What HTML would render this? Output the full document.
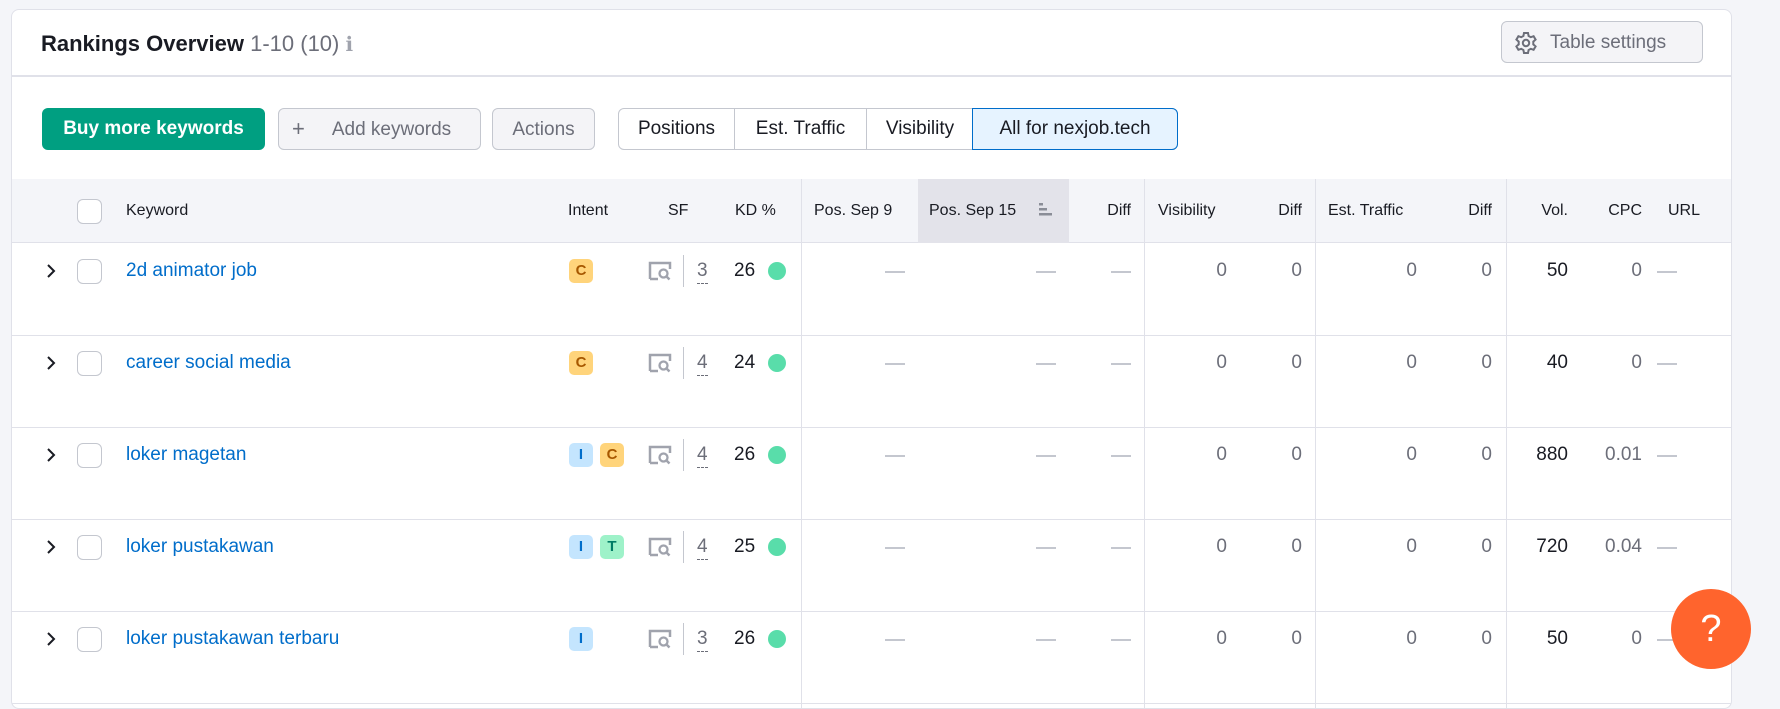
<!DOCTYPE html>
<html><head><meta charset="utf-8"><style>
*{box-sizing:border-box;margin:0;padding:0}
body{width:1780px;height:696px;background:#f4f5f9;font-family:"Liberation Sans",sans-serif;position:relative;overflow:hidden;color:#191b23}
.card{position:absolute;left:11px;top:9px;width:1721px;height:700px;background:#fff;border:1px solid #e0e1e9;border-radius:8px;overflow:hidden}
.a{position:absolute;white-space:nowrap}
.btn{position:absolute;top:98px;height:42px;border-radius:6px;font-size:19px;line-height:42px;text-align:center}
.g{background:#f4f4f7;border:1px solid #c4c7cf;color:#6c6e79}
.seg{position:absolute;top:0;height:42px;font-size:19px;line-height:40px;text-align:center;color:#191b23}
.th{position:absolute;top:0;font-size:16px;line-height:64px;color:#191b23}
.vl{position:absolute;width:1px;background:#e0e1e9}
.cb{position:absolute;width:25px;height:25px;border:1px solid #c4c7cf;border-radius:6px;background:#fff}
.kw{font-size:19px;color:#006dca}
.num{font-size:19px;color:#6c6e79}
.dash{position:absolute;width:20px;height:2px;background:#c4c7cf}
.bd{position:absolute;width:24px;height:24px;border-radius:5px;font-size:15px;font-weight:bold;text-align:center;line-height:24px}
</style></head><body>
<div class="card">
 <div class="a" style="left:29px;top:18px;font-size:22px;font-weight:bold;line-height:32px">Rankings Overview <span style="font-weight:normal;color:#6c6e79">1-10 (10)</span> <span style="color:#a0a3ad;font-weight:normal;font-size:20px">ℹ</span></div>
 <div class="a" style="left:1489px;top:11px;width:202px;height:42px;border:1px solid #c4c7cf;border-radius:6px;background:#f4f4f7;color:#6c6e79;font-size:19px;line-height:42px;padding-left:48px">Table settings</div>
 <svg class="a" style="left:1502px;top:21px" width="24" height="24" viewBox="0 0 24 24" fill="none" stroke="#6c6e79" stroke-width="2"><circle cx="12" cy="12" r="3.2"/><path d="M10 2h4l.6 3 2.2 1.2 2.8-1 2 3.4-2.3 2v2.8l2.3 2-2 3.4-2.8-1-2.2 1.2-.6 3h-4l-.6-3-2.2-1.2-2.8 1-2-3.4 2.3-2v-2.8l-2.3-2 2-3.4 2.8 1 2.2-1.2z"/></svg>
 <div class="a" style="left:0;top:65px;width:1721px;height:2px;background:#e0e1e9"></div>
 <div class="btn" style="left:30px;width:223px;background:#009f81;color:#fff;font-weight:bold">Buy more keywords</div>
 <div class="btn g" style="left:266px;width:203px;padding-left:24px"><span style="position:absolute;left:13px;font-size:22px;top:-1px">+</span>Add keywords</div>
 <div class="btn g" style="left:480px;width:103px">Actions</div>
 <div class="a" style="left:606px;top:98px;width:560px;height:42px;border:1px solid #c4c7cf;border-radius:6px;background:#fff;overflow:hidden">
  <div class="seg" style="left:0;width:116px;border-right:1px solid #c4c7cf">Positions</div>
  <div class="seg" style="left:116px;width:132px;border-right:1px solid #c4c7cf">Est. Traffic</div>
  <div class="seg" style="left:248px;width:106px">Visibility</div>
 </div>
 <div class="a" style="left:960px;top:98px;width:206px;height:42px;border:1px solid #006dca;background:#e6f3ff;border-radius:0 6px 6px 0;font-size:19px;line-height:40px;text-align:center">All for nexjob.tech</div>
 <div class="a" style="left:0;top:169px;width:1721px;height:530px">
  <div class="a" style="left:0;top:0;width:1721px;height:64px;background:#f4f5f9;border-bottom:1px solid #e0e1e9"></div>
  <div class="a" style="left:906px;top:0;width:151px;height:64px;background:#e3e3ea"></div>
  <div class="cb" style="left:65px;top:20px"></div>
  <div class="th" style="left:114px">Keyword</div>
  <div class="th" style="left:556px">Intent</div>
  <div class="th" style="left:656px">SF</div>
  <div class="th" style="left:723px">KD %</div>
  <div class="th" style="left:802px">Pos. Sep 9</div>
  <div class="th" style="left:917px">Pos. Sep 15</div>
  <svg class="a" style="left:1025px;top:22px" width="16" height="16"><rect x="2" y="2" width="4" height="2.5" fill="#8a8d97"/><rect x="2" y="7" width="8" height="2.5" fill="#8a8d97"/><rect x="2" y="12" width="13" height="2.5" fill="#8a8d97"/></svg>
  <div class="th" style="left:1089px;width:30px;text-align:right">Diff</div>
  <div class="th" style="left:1146px">Visibility</div>
  <div class="th" style="left:1260px;width:30px;text-align:right">Diff</div>
  <div class="th" style="left:1316px">Est. Traffic</div>
  <div class="th" style="left:1450px;width:30px;text-align:right">Diff</div>
  <div class="th" style="left:1516px;width:40px;text-align:right">Vol.</div>
  <div class="th" style="left:1590px;width:40px;text-align:right">CPC</div>
  <div class="th" style="left:1656px">URL</div>
  <div class="vl" style="left:789px;top:0;height:530px"></div>
  <div class="vl" style="left:1132px;top:0;height:530px"></div>
  <div class="vl" style="left:1303px;top:0;height:530px"></div>
  <div class="vl" style="left:1494px;top:0;height:530px"></div>
  <div id="rows"></div>
 </div>
</div>
<div class="a" style="left:1671px;top:589px;width:80px;height:80px;border-radius:50%;background:#ff642d;color:#fff;font-size:38px;text-align:center;line-height:80px">?</div>
<script>
var R=[["2d animator job",["C"],"3","26","50","0"],["career social media",["C"],"4","24","40","0"],["loker magetan",["I","C"],"4","26","880","0.01"],["loker pustakawan",["I","T"],"4","25","720","0.04"],["loker pustakawan terbaru",["I"],"3","26","50","0"]];
var col={C:["#ffd47b","#a75800"],I:["#c4e5fe","#006dca"],T:["#9ef2c9","#007c65"]};
var h="";
R.forEach(function(r,i){var t=64+i*92,c=t+28;
h+='<div class="a" style="left:0;top:'+(t+92)+'px;width:1721px;height:1px;background:#e0e1e9"></div>';
h+='<svg class="a" style="left:34px;top:'+(c-7)+'px" width="10" height="14"><path d="M2 1l6 6-6 6" stroke="#191b23" stroke-width="2" fill="none"/></svg>';
h+='<div class="cb" style="left:65px;top:'+(c-12)+'px"></div>';
h+='<div class="a kw" style="left:114px;top:'+(c-12)+'px;line-height:24px">'+r[0]+'</div>';
r[1].forEach(function(b,j){h+='<div class="bd" style="left:'+(557+j*31)+'px;top:'+(c-12)+'px;background:'+col[b][0]+';color:'+col[b][1]+'">'+b+'</div>'});
h+='<svg class="a" style="left:636px;top:'+(c-10)+'px" width="24" height="20"><path d="M2 18V2h20v6" stroke="#a0a3ad" stroke-width="2.5" fill="none"/><path d="M2 18h8" stroke="#a0a3ad" stroke-width="2.5"/><circle cx="15.5" cy="12.5" r="4" stroke="#a0a3ad" stroke-width="2.3" fill="none"/><path d="M18.5 15.5l3 3" stroke="#a0a3ad" stroke-width="2.5"/></svg>';
h+='<div class="a" style="left:671px;top:'+(c-16)+'px;width:1px;height:32px;background:#c4c7cf"></div>';
h+='<div class="a num" style="left:685px;top:'+(c-12)+'px;line-height:24px;border-bottom:1px dashed #6c6e79">'+r[2]+'</div>';
h+='<div class="a" style="left:722px;top:'+(c-12)+'px;font-size:19px;line-height:24px">'+r[3]+'</div>';
h+='<div class="a" style="left:756px;top:'+(c-9)+'px;width:18px;height:18px;border-radius:50%;background:#59ddaa"></div>';
[873,1024,1099,1645].forEach(function(x){h+='<div class="dash" style="left:'+x+'px;top:'+c+'px"></div>'});
[[1215,"0",0],[1290,"0",0],[1405,"0",0],[1480,"0",0],[1556,r[4],1],[1630,r[5],0]].forEach(function(v){h+='<div class="a num" style="left:'+(v[0]-60)+'px;width:60px;text-align:right;top:'+(c-12)+'px;line-height:24px;'+(v[2]?'color:#191b23':'')+'">'+v[1]+'</div>'});
});
document.getElementById("rows").innerHTML=h;
</script>
</body></html>
